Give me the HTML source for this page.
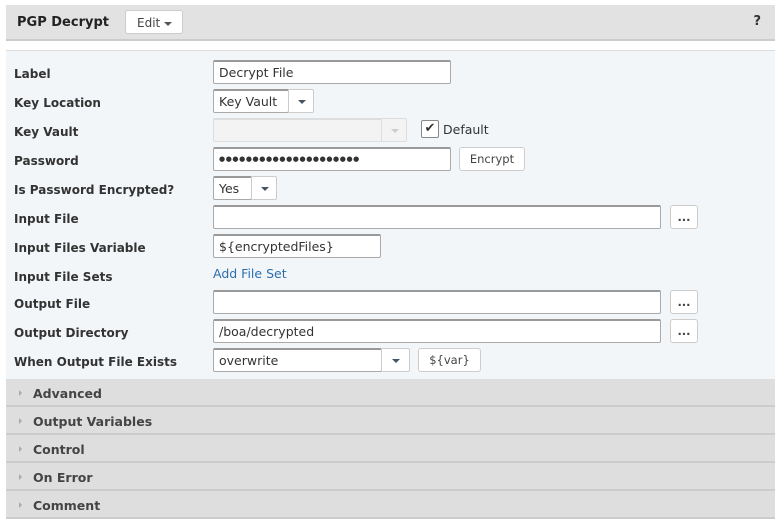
<!DOCTYPE html>
<html><head><style>
*{box-sizing:border-box;margin:0;padding:0}
body{width:781px;height:527px;background:#fff;font-family:"DejaVu Sans","Liberation Sans",sans-serif;font-size:13px;color:#333;position:relative;overflow:hidden}
.hdr{position:absolute;left:6px;top:5px;width:769px;height:36px;background:#e2e2e2;border-bottom:2px solid #ccc}
.hdr b{position:absolute;left:11px;top:10px;font-size:13px;color:#222}
.edit{position:absolute;left:119px;top:5px;width:58px;height:24px;background:#fff;border:1px solid #ccc;border-radius:3px;font-size:12px;color:#444;padding:5px 0 0 11px}
.car{display:inline-block;width:0;height:0;border-left:4px solid transparent;border-right:4px solid transparent;border-top:4px solid #555;vertical-align:middle;margin-left:4px}
.q{position:absolute;right:14px;top:9px;font-weight:bold;font-size:13px}
.panel{position:absolute;left:6px;top:50px;width:769px;height:330px;background:#f3f6f8;border-top:1px solid #ddd}
.lbl{position:absolute;left:14px;font-weight:bold;font-size:12px;color:#333}
.in{position:absolute;height:24px;background:#fff;border:1px solid #aaa;border-top:2px solid #999;border-radius:2px;font-size:12.5px;padding:3px 5px;color:#333}
.btn{position:absolute;height:24px;background:#fff;border:1px solid #ccc;border-radius:3px;font-size:11.5px;color:#444;text-align:center;padding-top:4px}
.dd{position:absolute;width:26px;height:24px;background:#fff;border:1px solid #ccc;border-radius:0 2px 2px 0}
.dd i{position:absolute;left:9px;top:10px;border-left:4px solid transparent;border-right:4px solid transparent;border-top:4px solid #456}
.sec{position:absolute;left:6px;width:769px;height:28px;background:#dedede;border-bottom:2px solid #ccc;font-weight:bold;font-size:12.5px;color:#444;padding:7px 0 0 27px}
.sec:before{content:"";position:absolute;left:13px;top:11px;border-top:3px solid transparent;border-bottom:3px solid transparent;border-left:3px solid #aaa}
a{color:#2a6fb0;text-decoration:none}
</style></head><body>
<div class="hdr"><b>PGP Decrypt</b><div class="edit">Edit<span class="car"></span></div><div class="q">?</div></div>
<div class="panel"></div>
<div class="lbl" style="top:67px">Label</div>
<div class="in" style="left:213px;top:60px;width:238px">Decrypt File</div>
<div class="lbl" style="top:96px">Key Location</div>
<div class="in" style="left:213px;top:89px;width:76px">Key Vault</div><div class="dd" style="left:288px;top:89px"><i></i></div>
<div class="lbl" style="top:125px">Key Vault</div>
<div class="in" style="left:213px;top:118px;width:169px;background:#f3f3f3;border-color:#ddd"></div><div class="dd" style="left:381px;top:118px;background:#f3f3f3;border-color:#ddd"><i style="border-top-color:#ccc"></i></div>
<div style="position:absolute;left:421px;top:120px;width:18px;height:18px;border:1px solid #888;border-radius:2px;background:#fff;font-size:13px;text-align:center;line-height:16px">✔</div>
<div style="position:absolute;left:443px;top:122px;font-size:12.5px">Default</div>
<div class="lbl" style="top:154px">Password</div>
<div class="in" style="left:213px;top:147px;width:238px;font-size:7px;padding-top:6px;letter-spacing:0.6px">●●●●●●●●●●●●●●●●●●●●●</div>
<div class="btn" style="left:459px;top:147px;width:66px">Encrypt</div>
<div class="lbl" style="top:183px">Is Password Encrypted?</div>
<div class="in" style="left:213px;top:176px;width:39px">Yes</div><div class="dd" style="left:251px;top:176px"><i></i></div>
<div class="lbl" style="top:212px">Input File</div>
<div class="in" style="left:213px;top:205px;width:448px"></div>
<div class="btn" style="left:670px;top:205px;width:28px;font-weight:bold">...</div>
<div class="lbl" style="top:241px">Input Files Variable</div>
<div class="in" style="left:213px;top:234px;width:168px">${encryptedFiles}</div>
<div class="lbl" style="top:270px">Input File Sets</div>
<a style="position:absolute;left:213px;top:266px;font-size:12.5px">Add File Set</a>
<div class="lbl" style="top:297px">Output File</div>
<div class="in" style="left:213px;top:290px;width:448px"></div>
<div class="btn" style="left:670px;top:290px;width:28px;font-weight:bold">...</div>
<div class="lbl" style="top:326px">Output Directory</div>
<div class="in" style="left:213px;top:319px;width:448px">/boa/decrypted</div>
<div class="btn" style="left:670px;top:319px;width:28px;font-weight:bold">...</div>
<div class="lbl" style="top:355px">When Output File Exists</div>
<div class="in" style="left:213px;top:348px;width:169px">overwrite</div><div class="dd" style="left:381px;top:348px;width:29px"><i style="left:10px"></i></div>
<div class="btn" style="left:418px;top:348px;width:63px">${var}</div>
<div class="sec" style="top:379px">Advanced</div>
<div class="sec" style="top:407px">Output Variables</div>
<div class="sec" style="top:435px">Control</div>
<div class="sec" style="top:463px">On Error</div>
<div class="sec" style="top:491px">Comment</div>
</body></html>
